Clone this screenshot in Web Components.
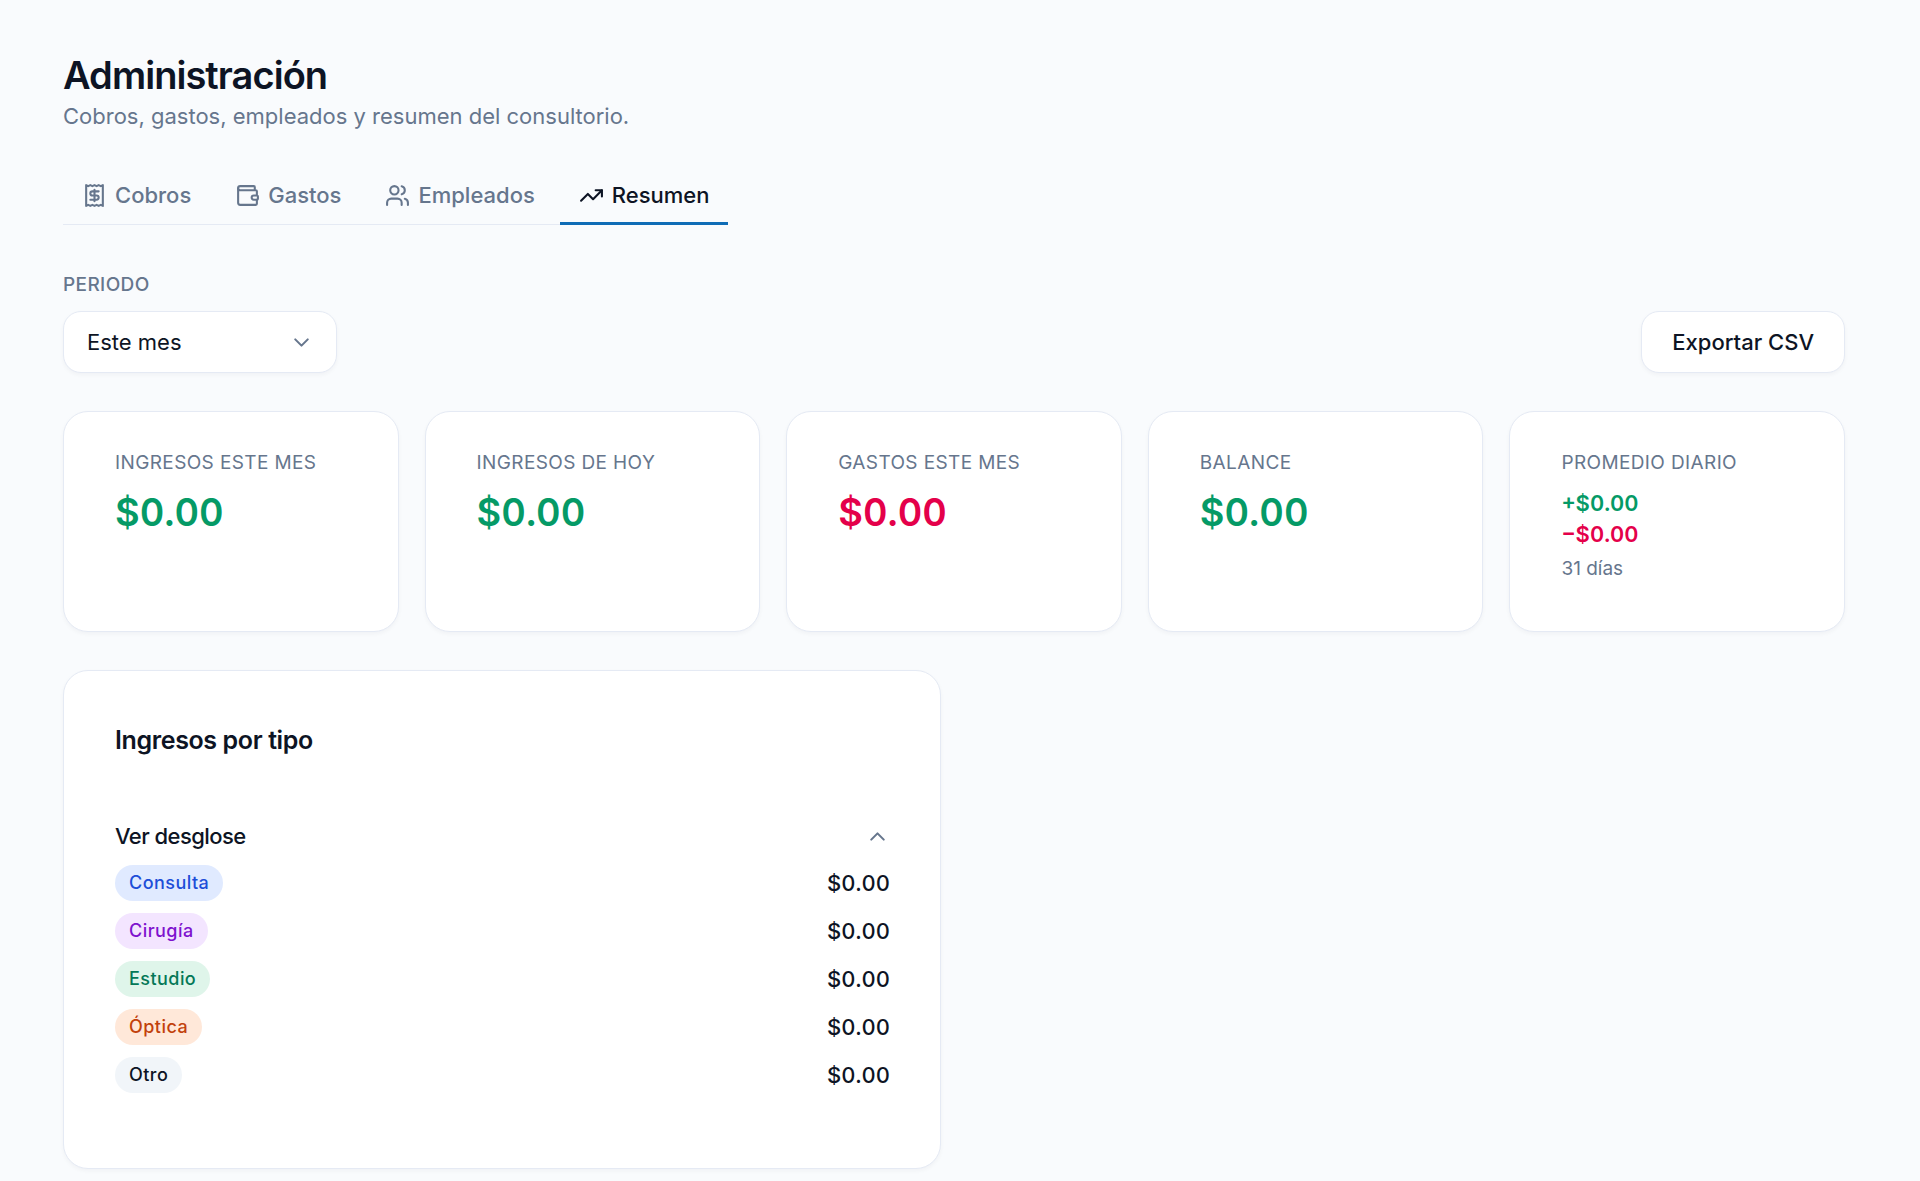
<!DOCTYPE html>
<html lang="es">
<head>
<meta charset="utf-8">
<meta name="viewport" content="width=device-width, initial-scale=1">
<title>Administración</title>
<style>
  :root {
    --bg: #f9fbfd;
    --surface: #ffffff;
    --border: #e5eaf4;
    --text: #0d1424;
    --muted: #66768d;
    --primary: #0f6cb6;
    --positive: #059a66;
    --negative: #e4004a;
    --shadow: 0 2px 4px rgba(15, 23, 42, 0.04);
  }
  body {
    margin: 0;
    background: var(--bg);
    color: var(--text);
    font-family: Inter, "Open Sans", sans-serif;
    font-size: 22px;
    line-height: 31px;
  }
</style>
</head>
<body>
<admin-page>
  <page-header slot="header" heading="Administración">Cobros, gastos, empleados y resumen del consultorio.</page-header>
  <tab-bar slot="tabs" label="Secciones">
    <tab-item icon="receipt">Cobros</tab-item>
    <tab-item icon="wallet">Gastos</tab-item>
    <tab-item icon="users">Empleados</tab-item>
    <tab-item icon="trending" active>Resumen</tab-item>
  </tab-bar>
  <period-select slot="filters" label="Periodo" options="Este mes, Mes anterior, Este año"></period-select>
  <action-button slot="filters">Exportar CSV</action-button>
  <stat-card slot="stats" label="Ingresos este mes" tone="positive">$0.00</stat-card>
  <stat-card slot="stats" label="Ingresos de hoy" tone="positive">$0.00</stat-card>
  <stat-card slot="stats" label="Gastos este mes" tone="negative">$0.00</stat-card>
  <stat-card slot="stats" label="Balance" tone="positive">$0.00</stat-card>
  <average-card slot="stats" label="Promedio diario" income="+$0.00" expense="−$0.00" days="31 días"></average-card>
  <breakdown-card slot="details" heading="Ingresos por tipo" toggle="Ver desglose">
    <breakdown-row tone="blue" amount="$0.00">Consulta</breakdown-row>
    <breakdown-row tone="purple" amount="$0.00">Cirugía</breakdown-row>
    <breakdown-row tone="green" amount="$0.00">Estudio</breakdown-row>
    <breakdown-row tone="orange" amount="$0.00">Óptica</breakdown-row>
    <breakdown-row tone="gray" amount="$0.00">Otro</breakdown-row>
  </breakdown-card>
</admin-page>

<script>
const ICONS = {
  receipt: `
    <path d="M4 2v20l2-1 2 1 2-1 2 1 2-1 2 1 2-1 2 1V2l-2 1-2-1-2 1-2-1-2 1-2-1-2 1Z"/>
    <path d="M16 8h-6a2 2 0 1 0 0 4h4a2 2 0 1 1 0 4H8"/>
    <path d="M12 17.5v-11"/>`,
  wallet: `
    <path d="M19 7V4a1 1 0 0 0-1-1H5a2 2 0 0 0 0 4h15a1 1 0 0 1 1 1v4h-3a2 2 0 0 0 0 4h3a1 1 0 0 0 1-1v-2a1 1 0 0 0-1-1"/>
    <path d="M3 5v14a2 2 0 0 0 2 2h15a1 1 0 0 0 1-1v-4"/>`,
  users: `
    <path d="M16 21v-2a4 4 0 0 0-4-4H6a4 4 0 0 0-4 4v2"/>
    <circle cx="9" cy="7" r="4"/>
    <path d="M22 21v-2a4 4 0 0 0-3-3.87"/>
    <path d="M16 3.13a4 4 0 0 1 0 7.75"/>`,
  trending: `
    <path d="M22 7l-8.5 8.5-5-5L2 17"/>
    <path d="M16 7h6v6"/>`,
  down: `<path d="m6 9 6 6 6-6"/>`,
  up: `<path d="m18 15-6-6-6 6"/>`
};

class UiIcon extends HTMLElement {
  constructor() {
    super();
    this.attachShadow({ mode: "open" });
  }

  connectedCallback() {
    this.shadowRoot.innerHTML = `
    <style>
    :host {
      display: block;
      flex: none;
      width: 25px;
      height: 25px;
    }
    svg {
      display: block;
      width: 100%;
      height: 100%;
      fill: none;
      stroke: currentColor;
      stroke-width: 2;
      stroke-linecap: round;
      stroke-linejoin: round;
    }
    </style>
    <svg viewBox="0 0 24 24" aria-hidden="true">${ICONS[this.getAttribute("name")]}</svg>
    `;
  }
}

class AdminPage extends HTMLElement {
  constructor() {
    super();
    this.attachShadow({ mode: "open" });
    this.shadowRoot.innerHTML = `
    <style>
    :host {
      display: block;
      padding: 51px 75px 13px 63px;
    }
    main {
      display: flex;
      flex-direction: column;
    }
    .tabs {
      display: flex;
      margin-top: 31px;
    }
    .filters {
      display: flex;
      align-items: flex-end;
      justify-content: space-between;
      margin-top: 46px;
    }
    .stats {
      display: grid;
      grid-template-columns: repeat(5, 1fr);
      gap: 26px;
      margin-top: 38px;
    }
    .details {
      display: grid;
      grid-template-columns: repeat(2, 1fr);
      gap: 26px;
      margin-top: 38px;
    }
    </style>
    <main>
      <slot name="header"></slot>
      <div class="tabs"><slot name="tabs"></slot></div>
      <div class="filters"><slot name="filters"></slot></div>
      <section class="stats"><slot name="stats"></slot></section>
      <section class="details"><slot name="details"></slot></section>
    </main>
    `;
  }
}

class PageHeader extends HTMLElement {
  constructor() {
    super();
    this.attachShadow({ mode: "open" });
    this.shadowRoot.innerHTML = `
    <style>
    :host {
      display: block;
    }
    h1 {
      margin: 0;
      font-size: 38px;
      font-weight: 600;
      line-height: 48px;
      letter-spacing: -0.025em;
    }
    p {
      margin: 0;
      color: var(--muted);
      line-height: 34px;
    }
    </style>
    <header>
      <h1></h1>
      <p><slot></slot></p>
    </header>
    `;
  }

  connectedCallback() {
    this.shadowRoot.querySelector("h1").textContent = this.getAttribute("heading");
  }
}

class TabBar extends HTMLElement {
  constructor() {
    super();
    this.attachShadow({ mode: "open" });
    this.shadowRoot.innerHTML = `
    <style>
    :host {
      display: block;
    }
    div {
      display: flex;
      gap: 6px;
      border-bottom: 1px solid var(--border);
    }
    </style>
    <div role="tablist"><slot></slot></div>
    `;
  }

  connectedCallback() {
    this.shadowRoot.querySelector("div").setAttribute("aria-label", this.getAttribute("label"));
  }
}

class TabItem extends HTMLElement {
  constructor() {
    super();
    this.attachShadow({ mode: "open" });
  }

  connectedCallback() {
    this.shadowRoot.innerHTML = `
    <style>
    :host {
      display: block;
      margin-bottom: -1px;
    }
    button {
      display: flex;
      align-items: center;
      gap: 8px;
      padding: 16px 19px 11px;
      border: 0;
      border-bottom: 3px solid transparent;
      background: none;
      color: var(--muted);
      font: inherit;
      font-weight: 500;
      cursor: pointer;
    }
    :host([active]) button {
      border-bottom-color: var(--primary);
      color: var(--text);
    }
    </style>
    <button type="button" role="tab" aria-selected="${this.hasAttribute("active")}">
      <ui-icon name="${this.getAttribute("icon")}"></ui-icon>
      <span><slot></slot></span>
    </button>
    `;
  }
}

class PeriodSelect extends HTMLElement {
  constructor() {
    super();
    this.attachShadow({ mode: "open" });
    this.shadowRoot.innerHTML = `
    <style>
    :host {
      display: flex;
      flex-direction: column;
      gap: 12px;
    }
    label {
      color: var(--muted);
      font-size: 19px;
      font-weight: 500;
      line-height: 28px;
      letter-spacing: 0.02em;
      text-transform: uppercase;
    }
    .field {
      display: grid;
      align-items: center;
      width: 274px;
    }
    select, ui-icon {
      grid-area: 1 / 1;
    }
    select {
      appearance: none;
      width: 100%;
      height: 62px;
      padding: 0 56px 0 23px;
      border: 1px solid var(--border);
      border-radius: 18px;
      background: var(--surface);
      box-shadow: var(--shadow);
      color: inherit;
      font: inherit;
    }
    ui-icon {
      justify-self: end;
      margin-right: 23px;
      color: var(--muted);
      pointer-events: none;
    }
    </style>
    <label for="period"></label>
    <div class="field">
      <select id="period"></select>
      <ui-icon name="down"></ui-icon>
    </div>
    `;
  }

  connectedCallback() {
    this.shadowRoot.querySelector("label").textContent = this.getAttribute("label");
    const select = this.shadowRoot.querySelector("select");
    this.getAttribute("options")
      .split(",")
      .map(item => item.trim())
      .forEach(text => select.append(new Option(text)));
  }
}

class ActionButton extends HTMLElement {
  constructor() {
    super();
    this.attachShadow({ mode: "open" });
    this.shadowRoot.innerHTML = `
    <style>
    :host {
      display: block;
    }
    button {
      height: 62px;
      padding: 0 30px;
      border: 1px solid var(--border);
      border-radius: 18px;
      background: var(--surface);
      box-shadow: var(--shadow);
      color: inherit;
      font: inherit;
      font-weight: 500;
      cursor: pointer;
    }
    </style>
    <button type="button"><slot></slot></button>
    `;
  }
}

// shared by every card on the page
const CARD_STYLES = `
    :host {
      display: block;
      box-sizing: border-box;
      border: 1px solid var(--border);
      border-radius: 25px;
      background: var(--surface);
      box-shadow: var(--shadow);
    }
    h2 {
      margin: 0;
    }
    p {
      margin: 0;
    }
`;

const STAT_STYLES = `
    :host {
      padding: 38px 50px 49px 51px;
    }
    h2 {
      color: var(--muted);
      font-size: 19px;
      font-weight: 400;
      line-height: 26px;
      letter-spacing: 0.02em;
      text-transform: uppercase;
    }
    .positive {
      color: var(--positive);
    }
    .negative {
      color: var(--negative);
    }
`;

class StatCard extends HTMLElement {
  constructor() {
    super();
    this.attachShadow({ mode: "open" });
  }

  connectedCallback() {
    this.shadowRoot.innerHTML = `
    <style>
    ${CARD_STYLES}
    ${STAT_STYLES}
    p {
      margin-top: 12px;
      font-size: 38px;
      font-weight: 600;
      line-height: 48px;
      font-variant-numeric: tabular-nums;
    }
    </style>
    <h2>${this.getAttribute("label")}</h2>
    <p class="${this.getAttribute("tone")}"><slot></slot></p>
    `;
  }
}

class AverageCard extends HTMLElement {
  constructor() {
    super();
    this.attachShadow({ mode: "open" });
  }

  connectedCallback() {
    this.shadowRoot.innerHTML = `
    <style>
    ${CARD_STYLES}
    ${STAT_STYLES}
    .values {
      margin-top: 12px;
      font-weight: 600;
      font-variant-numeric: tabular-nums;
    }
    .days {
      margin-top: 6px;
      color: var(--muted);
      font-size: 19px;
      line-height: 26px;
    }
    </style>
    <h2>${this.getAttribute("label")}</h2>
    <div class="values">
      <p class="positive">${this.getAttribute("income")}</p>
      <p class="negative">${this.getAttribute("expense")}</p>
    </div>
    <p class="days">${this.getAttribute("days")}</p>
    `;
  }
}

class BreakdownCard extends HTMLElement {
  constructor() {
    super();
    this.attachShadow({ mode: "open" });
  }

  connectedCallback() {
    this.shadowRoot.innerHTML = `
    <style>
    ${CARD_STYLES}
    :host {
      padding: 50px 50px 75px 51px;
    }
    h2 {
      font-size: 25px;
      font-weight: 600;
      line-height: 38px;
      letter-spacing: -0.015em;
    }
    button {
      display: flex;
      align-items: center;
      justify-content: space-between;
      width: 100%;
      margin-top: 62px;
      padding: 0;
      border: 0;
      background: none;
      color: inherit;
      font: inherit;
      font-weight: 500;
      letter-spacing: -0.025em;
      cursor: pointer;
    }
    ui-icon {
      color: var(--muted);
    }
    .rows {
      display: flex;
      flex-direction: column;
      gap: 12px;
      margin-top: 13px;
    }
    .rows[hidden] {
      display: none;
    }
    </style>
    <h2>${this.getAttribute("heading")}</h2>
    <button type="button" aria-expanded="true" aria-controls="rows">
      <span>${this.getAttribute("toggle")}</span>
      <ui-icon name="up"></ui-icon>
    </button>
    <div class="rows" id="rows" role="list"><slot></slot></div>
    `;

    const button = this.shadowRoot.querySelector("button");
    const rows = this.shadowRoot.querySelector(".rows");
    button.addEventListener("click", () => {
      rows.hidden = !rows.hidden;
      button.setAttribute("aria-expanded", String(!rows.hidden));
    });
  }
}

class BreakdownRow extends HTMLElement {
  constructor() {
    super();
    this.attachShadow({ mode: "open" });
  }

  connectedCallback() {
    this.setAttribute("role", "listitem");
    this.shadowRoot.innerHTML = `
    <style>
    :host {
      display: flex;
      align-items: center;
      justify-content: space-between;
    }
    .badge {
      padding: 5px 14px;
      border-radius: 18px;
      font-size: 18px;
      font-weight: 500;
      line-height: 26px;
      letter-spacing: 0.025em;
    }
    .blue { background: #e0eaff; color: #1d4ed8; }
    .purple { background: #f3e5ff; color: #7e12ce; }
    .green { background: #dff5ea; color: #047857; }
    .orange { background: #ffe8d9; color: #c2410c; }
    .gray { background: #f1f5f9; color: var(--text); }
    .amount {
      font-weight: 500;
      font-variant-numeric: tabular-nums;
    }
    </style>
    <span class="badge ${this.getAttribute("tone")}"><slot></slot></span>
    <span class="amount">${this.getAttribute("amount")}</span>
    `;
  }
}

window.customElements.define("ui-icon", UiIcon);
window.customElements.define("admin-page", AdminPage);
window.customElements.define("page-header", PageHeader);
window.customElements.define("tab-bar", TabBar);
window.customElements.define("tab-item", TabItem);
window.customElements.define("period-select", PeriodSelect);
window.customElements.define("action-button", ActionButton);
window.customElements.define("stat-card", StatCard);
window.customElements.define("average-card", AverageCard);
window.customElements.define("breakdown-card", BreakdownCard);
window.customElements.define("breakdown-row", BreakdownRow);
</script>
</body>
</html>
